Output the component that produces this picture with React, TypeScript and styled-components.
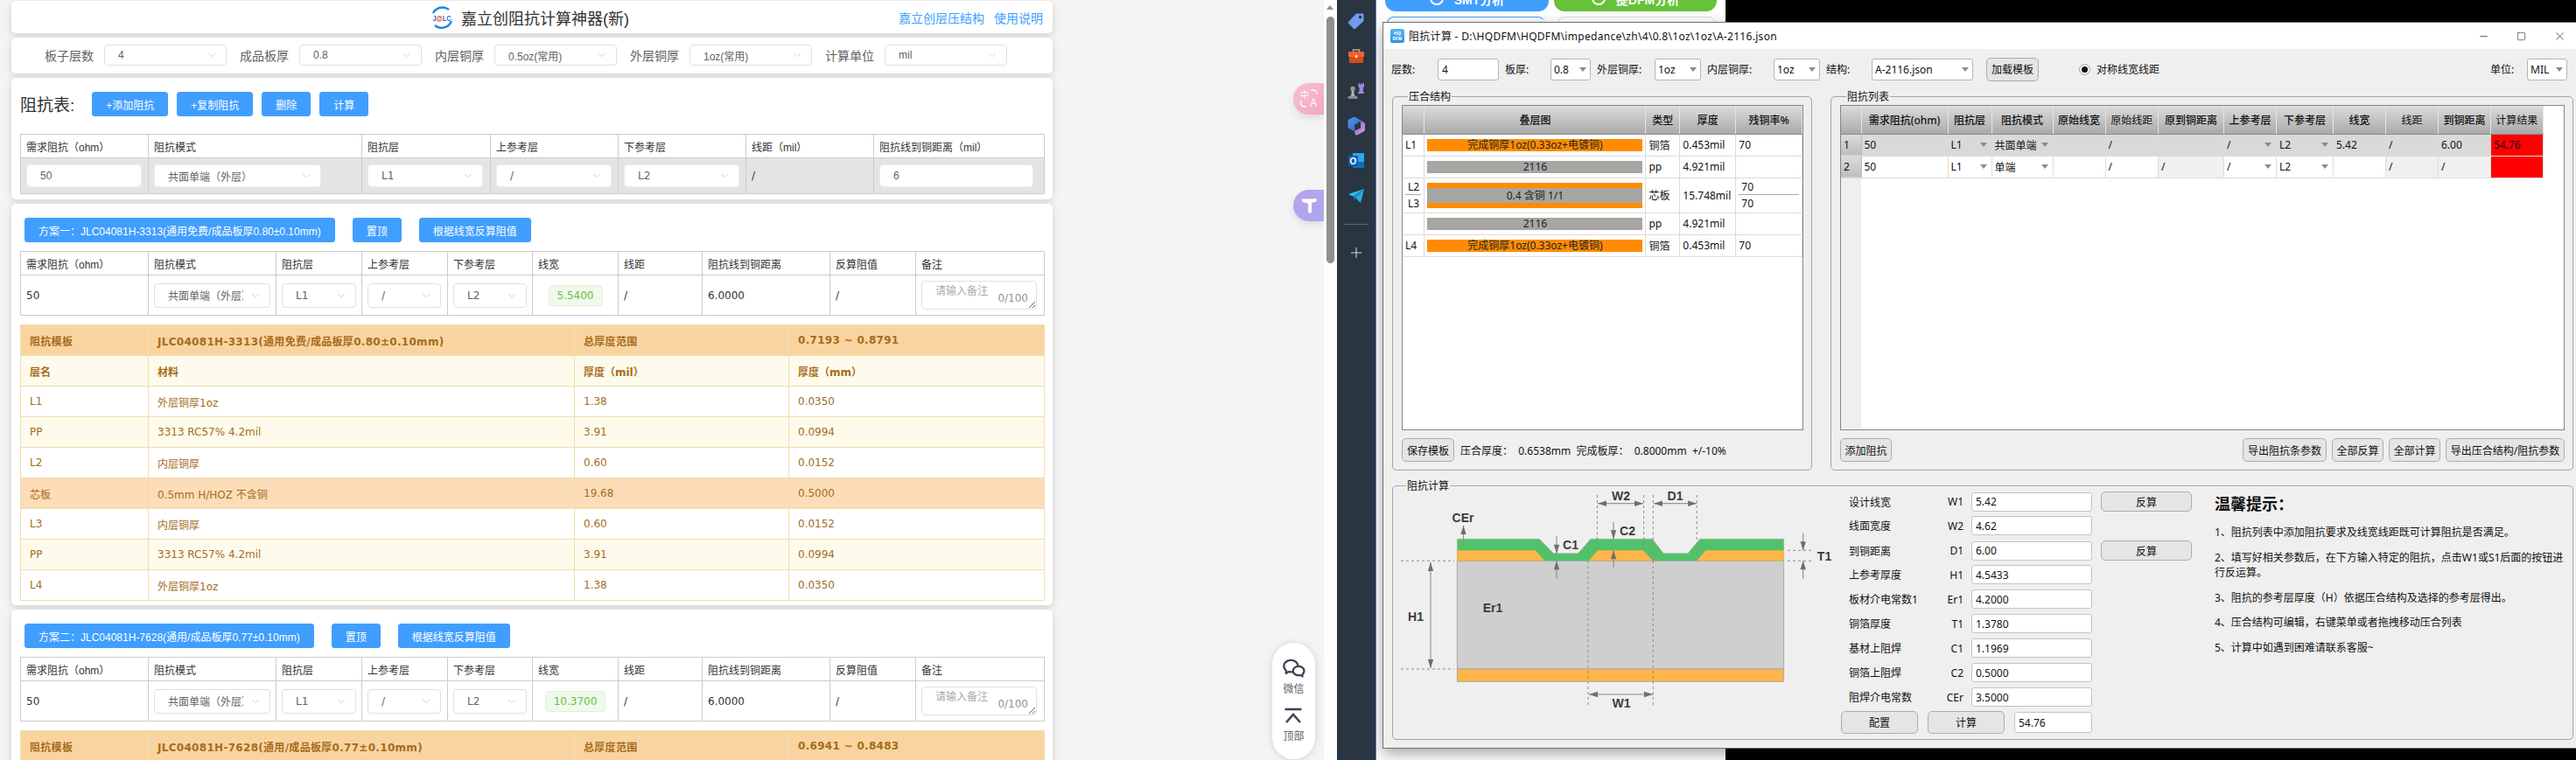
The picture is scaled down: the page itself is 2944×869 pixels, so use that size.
import React from "react";
import styled, { createGlobalStyle } from "styled-components";
import { Minus, Square, X, ChevronDown } from "lucide-react";
import { RiWechatLine } from "react-icons/ri";

const CJK = `"Noto Sans CJK SC"`;
const SANS = `"Liberation Sans", ${CJK}, sans-serif`;
const WIDE = `"DejaVu Sans", ${CJK}, sans-serif`;
const QT = `"Noto Sans", ${CJK}, sans-serif`;

const GlobalStyle = createGlobalStyle`
  html, body { margin: 0; padding: 0; width: 2944px; height: 869px; overflow: hidden; background: #000; }
  * { box-sizing: border-box; }
  #root { width: 2944px; height: 869px; }
`;

const Screen = styled.div`
  display: flex;
  width: 2944px;
  height: 869px;
  overflow: hidden;
  font-family: ${SANS};
`;

/* ---------- browser page ---------- */

const Page = styled.div`
  position: relative;
  flex: 0 0 1513px;
  height: 869px;
  overflow: hidden;
  background: #f4f4f4;
  padding: 1px 0 0 13px;
  display: flex;
  flex-direction: column;
  gap: 5px;
`;

const Card = styled.section<{ $h?: number }>`
  flex: none;
  width: 1190px;
  ${(p) => (p.$h ? `height: ${p.$h}px;` : "")}
  background: #fff;
  border-radius: 5px;
  box-shadow: 0 2px 8px rgba(0, 0, 0, 0.14);
`;

const HeaderCard = styled(Card)`
  display: flex;
  align-items: center;
  padding: 0 11px 0 479px;
`;

const Logo = styled.svg`
  width: 26px;
  height: 26px;
  margin-right: 9px;
`;

const SiteTitle = styled.h1`
  margin: 0;
  font-size: 18px;
  font-weight: 400;
  color: #303133;
  white-space: nowrap;
`;

const Links = styled.nav`
  margin-left: auto;
  display: flex;
  gap: 11px;
`;

const SiteLink = styled.a`
  font-size: 14px;
  color: #409eff;
`;

const OptionsCard = styled(Card)`
  display: flex;
  align-items: center;
  gap: 15px;
  padding-left: 38px;
  padding-bottom: 1px;
`;

const OptionGroup = styled.label`
  display: flex;
  align-items: center;
  gap: 12px;
  font-size: 14px;
  color: #606266;
  white-space: nowrap;
`;

const SelectBox = styled.div<{ $w: number; $h: number; $flat?: boolean }>`
  flex: none;
  width: ${(p) => p.$w}px;
  height: ${(p) => p.$h}px;
  display: flex;
  align-items: center;
  gap: 7px;
  padding: 0 9px 0 15px;
  background: #fff;
  border: 1px solid ${(p) => (p.$flat ? "#ececf0" : "#dcdfe6")};
  border-radius: 4px;
  font-size: 12px;
  color: #606266;
  white-space: nowrap;
`;

const Clip = styled.span`
  flex: 1;
  min-width: 0;
  overflow: hidden;
`;

const Chevron = styled(ChevronDown)`
  flex: none;
  width: 14px;
  height: 14px;
  color: #c0c4cc;
  stroke-width: 1.3;
`;

const SectionCard = styled(Card)`
  padding: 16px 11px 0 10px;
`;

const TitleRow = styled.div`
  display: flex;
  align-items: center;
  gap: 10px;
  height: 28px;
`;

const TableTitle = styled.h2`
  margin: 0 10px 2px 0;
  font-size: 19px;
  font-weight: 400;
  color: #303133;
  white-space: nowrap;
`;

const BlueButton = styled.button`
  flex: none;
  height: 28px;
  padding: 0 15px;
  border: 1px solid #409eff;
  border-radius: 3px;
  background: #409eff;
  color: #fff;
  font-family: ${SANS};
  font-size: 12px;
  white-space: nowrap;
`;

const SchemeRow = styled.div`
  display: flex;
  gap: 20px;
  padding-left: 5px;
  margin-bottom: 10px;
`;

const Grid = styled.table<{ $mt?: number }>`
  table-layout: fixed;
  border-collapse: collapse;
  width: 1170px;
  margin-top: ${(p) => p.$mt ?? 0}px;
  font-family: ${WIDE};
  font-size: 12px;
  color: #333;
`;

const Col = styled.col<{ $w: number }>`
  width: ${(p) => p.$w}px;
`;

const Th = styled.th`
  height: 27px;
  padding: 0 6px;
  border: 1px solid #ccc;
  font-family: ${SANS};
  font-weight: 400;
  text-align: left;
  white-space: nowrap;
  color: #333;
`;

const Td = styled.td<{ $gray?: boolean; $h: number }>`
  height: ${(p) => p.$h}px;
  padding: 0 6px;
  border: 1px solid #ccc;
  background: ${(p) => (p.$gray ? "#e4e4e4" : "#fff")};
  white-space: nowrap;
`;

const Field = styled.input<{ $w: number }>`
  display: block;
  width: ${(p) => p.$w}px;
  height: 26px;
  padding: 0 15px;
  background: #fff;
  border: 1px solid #ececf0;
  border-radius: 4px;
  font-family: ${SANS};
  font-size: 12px;
  color: #606266;
  outline: none;
`;

const ResultTag = styled.span`
  display: block;
  width: max-content;
  height: 24px;
  margin: 0 auto;
  padding: 0 9px;
  line-height: 22px;
  background: #f0f9eb;
  border: 1px solid #e1f3d8;
  border-radius: 4px;
  color: #67c23a;
`;

const NoteWrap = styled.div`
  position: relative;
  width: 132px;
  height: 33px;
`;

const Note = styled.textarea`
  display: block;
  width: 132px;
  height: 33px;
  padding: 4px 15px;
  border: 1px solid #dcdfe6;
  border-radius: 4px;
  font-family: ${SANS};
  font-size: 12px;
  line-height: 15px;
  overflow: hidden;
  outline: none;
  &::placeholder { color: #a8abb2; }
`;

const Counter = styled.span`
  position: absolute;
  right: 10px;
  bottom: 5px;
  font-family: ${WIDE};
  font-size: 12px;
  line-height: 16px;
  color: #909399;
`;

const Stack = styled.table`
  table-layout: fixed;
  border-collapse: collapse;
  width: 1170px;
  margin-top: 10px;
  font-family: ${WIDE};
  font-size: 12px;
  color: #a56c1c;
`;

type Tone = "head" | "sub" | "white" | "pale" | "core";
const toneBg: Record<Tone, string> = {
  head: "#fad4a0",
  sub: "#fefbec",
  white: "#fff",
  pale: "#fefbec",
  core: "#fddcb8",
};

const StackRow = styled.tr<{ $tone: Tone }>`
  background: ${(p) => toneBg[p.$tone]};
  font-weight: ${(p) => (p.$tone === "head" || p.$tone === "sub" ? 700 : 400)};
  letter-spacing: ${(p) => (p.$tone === "head" ? "0.3px" : "0")};
`;

const StackCell = styled.td`
  height: 35px;
  padding: 0 10px;
  border: 1px solid #ecdfb0;
  white-space: nowrap;
`;

const Pill = styled.div`
  position: absolute;
  left: 1454px;
  top: 735px;
  width: 49px;
  height: 133px;
  border-radius: 25px;
  background: #fff;
  box-shadow: 0 1px 8px rgba(60, 70, 100, 0.2);
  display: flex;
  flex-direction: column;
  align-items: center;
  padding-top: 15px;
  font-size: 12px;
  color: #5c6068;
`;

const PillItem = styled.div`
  display: flex;
  flex-direction: column;
  align-items: center;
  gap: 2px;
  margin-bottom: 12px;
  line-height: 16px;
`;

const EdgeTab = styled.div<{ $top: number; $from: string; $to: string }>`
  position: absolute;
  left: 1478px;
  top: ${(p) => p.$top}px;
  width: 35px;
  height: 36px;
  border-radius: 18px 0 0 18px;
  background: linear-gradient(135deg, ${(p) => p.$from}, ${(p) => p.$to});
  box-shadow: 0 4px 10px rgba(0, 0, 0, 0.1);
  display: flex;
  align-items: center;
  justify-content: center;
`;

const ScrollTrack = styled.div`
  flex: 0 0 15px;
  height: 869px;
  background: #fdfdfd;
  padding: 6px 0 0 3px;
`;

const ScrollArrow = styled.div`
  width: 0;
  border: 4.5px solid transparent;
  border-top: 0;
  border-bottom: 5px solid #8f8f8f;
`;

const ScrollThumb = styled.div`
  width: 9px;
  height: 282px;
  margin-top: 8px;
  border-radius: 5px;
  background: #8f8f8f;
`;

const Dock = styled.aside`
  flex: 0 0 45px;
  height: 869px;
  background: #2a3542;
  border-right: 1px solid #4f86c6;
  padding-top: 4px;
  display: flex;
  flex-direction: column;
  align-items: center;
`;

const DockIcon = styled.div`
  flex: none;
  width: 44px;
  height: 40px;
  display: flex;
  align-items: center;
  justify-content: center;
`;

const DockLine = styled.div`
  width: 28px;
  height: 1px;
  margin: 12px 0 12px;
  background: #5c6672;
`;

/* ---------- desktop and window ---------- */

const Desktop = styled.main`
  position: relative;
  flex: 1;
  height: 869px;
  background: #000;
  overflow: hidden;
`;

const BackApp = styled.div`
  width: 399px;
  height: 869px;
  background: #fff;
  padding: 0 10px;
`;

const BackButtons = styled.div`
  display: flex;
  gap: 6px;
`;

const BackButton = styled.div<{ $c: string; $w: number }>`
  display: flex;
  justify-content: center;
  gap: 12px;
  width: ${(p) => p.$w}px;
  height: 13px;
  background: ${(p) => p.$c};
  border-radius: 0 0 12px 12px;
  color: #fff;
  font-size: 14px;
  font-weight: 700;
  line-height: 0;
  overflow: hidden;
`;

const BackGlyph = styled.i`
  flex: none;
  width: 16px;
  height: 16px;
  margin-top: -10px;
  border: 2px solid #fff;
  border-radius: 50%;
`;

const BackTabs = styled.div`
  display: flex;
  gap: 14px;
  margin: 6px 0 0 2px;
`;

const BackTab = styled.div<{ $active?: boolean }>`
  width: 181px;
  height: 12px;
  border: 1px solid #d8dce3;
  border-radius: 8px 8px 0 0;
  ${(p) => (p.$active ? "border-color: #409eff #d8dce3 #d8dce3 #409eff;" : "")}
`;

const AppWindow = styled.div`
  position: absolute;
  left: 7px;
  top: 25px;
  width: 1364px;
  height: 831px;
  background: #efefef;
  border-left: 1px solid #6f6f6f;
  border-top: 1px solid #6f6f6f;
  border-bottom: 1px solid #6f6f6f;
  box-shadow: 0 6px 16px rgba(0, 0, 0, 0.35);
  font-family: ${QT};
  font-size: 12px;
  color: #111;
`;

const TitleBar = styled.header`
  display: flex;
  align-items: center;
  height: 30px;
  padding-left: 8px;
  background: #fff;
`;

const AppIcon = styled.div`
  width: 16px;
  height: 16px;
  margin-right: 5px;
  border-radius: 2px;
  background: linear-gradient(#57b6f5, #2f8fe0);
  color: #fff;
  font-size: 5px;
  line-height: 6px;
  text-align: center;
  padding-top: 2px;
  font-weight: 700;
`;

const WindowName = styled.span`
  letter-spacing: 0.3px;
  white-space: nowrap;
`;

const WindowControls = styled.div`
  margin-left: auto;
  display: flex;
  align-items: center;
  gap: 31px;
  padding-right: 11px;
`;

const Toolbar = styled.div`
  display: flex;
  align-items: center;
  height: 46px;
  padding: 0 3px 0 9px;
`;

const ToolLabel = styled.span<{ $w: number }>`
  flex: none;
  width: ${(p) => p.$w}px;
  white-space: nowrap;
`;

const Combo = styled.div<{ $w: number; $ml?: number }>`
  flex: none;
  width: ${(p) => p.$w}px;
  height: 25px;
  margin: 0 7px 0 ${(p) => p.$ml ?? 0}px;
  padding: 0 4px 0 3px;
  display: flex;
  align-items: center;
  justify-content: space-between;
  background: #fff;
  border: 1px solid #b5b5b5;
  border-radius: 3px;
  white-space: nowrap;
`;

const Caret = styled.i`
  flex: none;
  width: 0;
  height: 0;
  border: 4px solid transparent;
  border-top: 5px solid #8c8c8c;
  border-bottom: 0;
`;

const ToolField = styled.input`
  flex: none;
  width: 70px;
  height: 25px;
  margin-right: 7px;
  padding: 0 4px;
  border: 1px solid #b5b5b5;
  border-radius: 3px;
  background: #fff;
  font: inherit;
  color: inherit;
  outline: none;
`;

const QtButton = styled.button<{ $w: number; $h?: number }>`
  flex: none;
  width: ${(p) => p.$w}px;
  height: ${(p) => p.$h ?? 27}px;
  padding: 0;
  background: #e5e5e5;
  border: 1px solid #adadad;
  border-radius: 5px;
  font-family: ${QT};
  font-size: 12px;
  color: #111;
  white-space: nowrap;
`;

const LoadButton = styled(QtButton)`
  margin-left: 8px;
`;

const Radio = styled.i`
  flex: none;
  display: flex;
  align-items: center;
  justify-content: center;
  width: 13px;
  height: 13px;
  margin: 0 7px 0 46px;
  border: 1px solid #a0a0a0;
  border-radius: 50%;
  background: #fff;
  &::after {
    content: "";
    width: 7px;
    height: 7px;
    border-radius: 50%;
    background: #111;
  }
`;

const GroupRow = styled.div`
  display: flex;
  gap: 21px;
  padding-left: 10px;
`;

const Group = styled.fieldset<{ $w: number; $h: number }>`
  flex: none;
  width: ${(p) => p.$w}px;
  height: ${(p) => p.$h}px;
  min-width: 0;
  margin: 0;
  padding: 1px 9px 0 10px;
  border: 1px solid #a6a6a6;
  border-radius: 5px;
`;

const GroupTitle = styled.legend`
  margin-left: 7px;
  padding: 0 1px;
  font-size: 12px;
  line-height: 17px;
`;

const GridFrame = styled.div`
  position: relative;
  height: 372px;
  background: #fff;
  border: 1px solid #85858c;
  overflow: hidden;
`;

const QtTable = styled.table`
  table-layout: fixed;
  border-collapse: collapse;
  font-size: 12px;
`;

const QtHead = styled.th<{ $strong?: boolean }>`
  height: 32px;
  padding: 0;
  background: linear-gradient(#dcdcdc, #a9a9a9);
  border-right: 1px solid #e4e4e4;
  border-bottom: 1px solid #8e8e8e;
  font-weight: ${(p) => (p.$strong ? 500 : 400)};
  text-align: center;
  white-space: nowrap;
`;

const QtCell = styled.td<{ $bg?: string }>`
  height: 25px;
  padding: 0 3px;
  background: ${(p) => p.$bg ?? "#fff"};
  border-right: 1px solid #dcdcdc;
  border-bottom: 1px solid #dcdcdc;
  white-space: nowrap;
  overflow: hidden;
`;

const TallCell = styled(QtCell)`
  height: 40px;
`;

const CellBar = styled.div<{ $c: string }>`
  height: 14px;
  line-height: 14px;
  background: ${(p) => p.$c};
  color: #222;
  text-align: center;
`;

const CoreBar = styled.div`
  height: 29px;
  line-height: 17px;
  background: #a8a6a3;
  border-top: 6px solid #ff8c00;
  border-bottom: 6px solid #ff8c00;
  color: #222;
  text-align: center;
`;

const SplitCell = styled.div`
  display: flex;
  flex-direction: column;
`;

const SplitPart = styled.div<{ $line?: boolean }>`
  height: 19px;
  line-height: 19px;
  padding-left: 3px;
  ${(p) => (p.$line ? "border-bottom: 1px solid #aaa;" : "")}
`;

const RowHead = styled(QtCell)`
  padding: 0 0 0 3px;
  background: linear-gradient(#dcdcdc, #bcbcbc);
  border-right: 1px solid #bdbdbd;
`;

const HeadStrip = styled.div`
  position: absolute;
  left: 0;
  top: 0;
  bottom: 0;
  width: 23px;
  background: #efefef;
`;

const ListTable = styled(QtTable)`
  position: relative;
`;

const CellCombo = styled.div`
  display: flex;
  align-items: center;
  justify-content: space-between;
  padding-right: 2px;
`;

const ActionRow = styled.div`
  display: flex;
  align-items: center;
  gap: 6px;
  margin-top: 9px;
`;

const Spacer = styled.div`
  flex: 1;
`;

const StackInfo = styled.span`
  margin-left: 1px;
  white-space: pre;
`;

const CalcGroup = styled(Group)`
  margin: 9px 0 0 10px;
  padding: 0 0 0 8px;
`;

const CalcBody = styled.div`
  display: flex;
  height: 100%;
`;

const Diagram = styled.svg`
  flex: none;
  width: 504px;
  height: 270px;
  overflow: visible;
  font-family: "Liberation Sans", sans-serif;
`;

const Form = styled.div`
  flex: none;
  width: 402px;
  margin-top: -2px;
`;

const FormRow = styled.div`
  display: grid;
  grid-template-columns: 90px 50px 138px 1fr;
  height: 22px;
  margin-bottom: 6px;
  padding-left: 9px;
  align-items: center;
`;

const FormCode = styled.span`
  text-align: right;
  padding-right: 9px;
`;

const FormField = styled.input<{ $w?: number; $h?: number }>`
  width: ${(p) => p.$w ?? 138}px;
  height: ${(p) => p.$h ?? 22}px;
  padding: 0 4px;
  background: #fff;
  border: 1px solid #c4c4c4;
  border-radius: 3px;
  font: inherit;
  color: inherit;
  outline: none;
`;

const BackCalc = styled(QtButton)`
  justify-self: end;
  margin-right: 1px;
`;

const FormActions = styled.div`
  display: flex;
  align-items: center;
  gap: 11px;
  margin-top: -1px;
`;

const Tips = styled.div`
  margin-left: 25px;
  width: 408px;
`;

const TipsTitle = styled.h3`
  margin: 0 0 12px;
  font-size: 18px;
  line-height: 24px;
  font-weight: 700;
`;

const Tip = styled.p`
  margin: 0 0 11px;
  line-height: 17.5px;
`;

/* ---------- data ---------- */

const options = [
  ["板子层数", "4"],
  ["成品板厚", "0.8"],
  ["内层铜厚", "0.5oz(常用)"],
  ["外层铜厚", "1oz(常用)"],
  ["计算单位", "mil"],
];

const inputCols = [146, 244, 147, 146, 146, 146, 195];
const inputHeads = ["需求阻抗（ohm）", "阻抗模式", "阻抗层", "上参考层", "下参考层", "线距（mil）", "阻抗线到铜距离（mil）"];

const schemeCols = [146, 146, 98, 98, 97, 98, 96, 146, 98, 147];
const schemeHeads = ["需求阻抗（ohm）", "阻抗模式", "阻抗层", "上参考层", "下参考层", "线宽", "线距", "阻抗线到铜距离", "反算阻值", "备注"];

const stackCols = [146, 487, 245, 292];

const stackRows: { tone: Tone; cells: string[] }[] = [
  { tone: "head", cells: ["阻抗模板", "JLC04081H-3313(通用免费/成品板厚0.80±0.10mm)", "总厚度范围", "0.7193 ~ 0.8791"] },
  { tone: "sub", cells: ["层名", "材料", "厚度（mil）", "厚度（mm）"] },
  { tone: "white", cells: ["L1", "外层铜厚1oz", "1.38", "0.0350"] },
  { tone: "pale", cells: ["PP", "3313 RC57% 4.2mil", "3.91", "0.0994"] },
  { tone: "white", cells: ["L2", "内层铜厚", "0.60", "0.0152"] },
  { tone: "core", cells: ["芯板", "0.5mm H/HOZ 不含铜", "19.68", "0.5000"] },
  { tone: "white", cells: ["L3", "内层铜厚", "0.60", "0.0152"] },
  { tone: "pale", cells: ["PP", "3313 RC57% 4.2mil", "3.91", "0.0994"] },
  { tone: "white", cells: ["L4", "外层铜厚1oz", "1.38", "0.0350"] },
];

const listCols = [23, 99, 50, 70, 60, 60.5, 75, 60, 65, 60, 60, 60, 59.5];
const listHeads: [string, boolean][] = [
  ["", false],
  ["需求阻抗(ohm)", true],
  ["阻抗层", true],
  ["阻抗模式", true],
  ["原始线宽", true],
  ["原始线距", false],
  ["原到铜距离", true],
  ["上参考层", true],
  ["下参考层", true],
  ["线宽", true],
  ["线距", false],
  ["到铜距离", true],
  ["计算结果", false],
];

const formRows = [
  ["设计线宽", "W1", "5.42", true],
  ["线面宽度", "W2", "4.62", false],
  ["到铜距离", "D1", "6.00", true],
  ["上参考厚度", "H1", "4.5433", false],
  ["板材介电常数1", "Er1", "4.2000", false],
  ["铜箔厚度", "T1", "1.3780", false],
  ["基材上阻焊", "C1", "1.1969", false],
  ["铜箔上阻焊", "C2", "0.5000", false],
  ["阻焊介电常数", "CEr", "3.5000", false],
] as const;

const tips = [
  "1、阻抗列表中添加阻抗要求及线宽线距既可计算阻抗是否满足。",
  "2、填写好相关参数后，在下方输入特定的阻抗，点击W1或S1后面的按钮进行反运算。",
  "3、阻抗的参考层厚度（H）依据压合结构及选择的参考层得出。",
  "4、压合结构可编辑，右键菜单或者拖拽移动压合列表",
  "5、计算中如遇到困难请联系客服~",
];

/* ---------- small parts ---------- */

const WebSelect: React.FC<{ w: number; h: number; flat?: boolean; value: string }> = ({ w, h, flat, value }) => (
  <SelectBox $w={w} $h={h} $flat={flat}>
    <Clip>{value}</Clip>
    <Chevron />
  </SelectBox>
);

const CellSelect: React.FC<{ value: string }> = ({ value }) => (
  <CellCombo>
    {value}
    <Caret />
  </CellCombo>
);

const Arrow: React.FC<{ x1: number; y1: number; x2: number; y2: number }> = ({ x1, y1, x2, y2 }) => {
  const a = Math.atan2(y2 - y1, x2 - x1);
  const len = 10;
  const wid = 3.2;
  const bx = x2 - len * Math.cos(a);
  const by = y2 - len * Math.sin(a);
  const px = wid * Math.sin(a);
  const py = wid * Math.cos(a);
  return (
    <g>
      <line x1={x1} y1={y1} x2={x2} y2={y2} stroke="#8a8a8a" strokeWidth="1.1" />
      <polygon points={`${x2},${y2} ${bx + px},${by - py} ${bx - px},${by + py}`} fill="#6f6f6f" />
    </g>
  );
};

const Dash: React.FC<{ x1: number; y1: number; x2: number; y2: number }> = (p) => (
  <line {...p} stroke="#8c8c8c" strokeWidth="1" strokeDasharray="3 3" />
);

const DiagramText: React.FC<{ x: number; y: number; children: string }> = ({ x, y, children }) => (
  <text x={x} y={y} fontSize="14" fontWeight="700" fill="#3c3c3c" textAnchor="middle" dominantBaseline="central">
    {children}
  </text>
);

const StackDiagram: React.FC = () => (
  <Diagram viewBox="0 4 504 270">
    <rect x="65.4" y="81.3" width="373.2" height="123.7" fill="#cfcfcf" stroke="#aaa" />
    <rect x="65.4" y="205" width="373.2" height="14.3" fill="#ffb548" stroke="#aaa" />
    <polygon
      points="65.4,56.3 159.3,56.3 175.4,72.7 203.6,72.7 217.9,56.3 288.6,56.3 301,72.7 329,72.7 342.9,56.3 438.6,56.3 438.6,81.3 65.4,81.3"
      fill="#52c16a"
      stroke="#a8a8a8"
      strokeWidth="0.6"
    />
    <polygon points="65.4,69.3 154.6,69.3 165.4,81.3 65.4,81.3" fill="#ffb548" />
    <polygon points="215.4,81.3 226,69.3 277.9,69.3 289,81.3" fill="#ffb548" />
    <polygon points="339.3,81.3 349.3,69.3 438.6,69.3 438.6,81.3" fill="#ffb548" />
    <Dash x1={1} y1={81.3} x2={62} y2={81.3} />
    <Dash x1={1} y1={205} x2={62} y2={205} />
    <Dash x1={225.4} y1={6} x2={225.4} y2={69} />
    <Dash x1={278.6} y1={6} x2={278.6} y2={69} />
    <Dash x1={289.3} y1={6} x2={289.3} y2={81} />
    <Dash x1={339.3} y1={6} x2={339.3} y2={81} />
    <Dash x1={215} y1={81} x2={215} y2={248} />
    <Dash x1={289.3} y1={81} x2={289.3} y2={248} />
    <Dash x1={443} y1={69.3} x2={472.5} y2={69.3} />
    <Dash x1={443} y1={81.3} x2={472.5} y2={81.3} />
    <Arrow x1={35} y1={144} x2={35} y2={83} />
    <Arrow x1={35} y1={144} x2={35} y2={204} />
    <Arrow x1={72.5} y1={60} x2={72.5} y2={41} />
    <Arrow x1={179} y1={52.7} x2={179} y2={72.7} />
    <Arrow x1={179} y1={101.3} x2={179} y2={81.3} />
    <Arrow x1={244} y1={36.7} x2={244} y2={56.3} />
    <Arrow x1={244} y1={88.7} x2={244} y2={69.3} />
    <Arrow x1={252} y1={15.7} x2={226} y2={15.7} />
    <Arrow x1={252} y1={15.7} x2={278} y2={15.7} />
    <Arrow x1={314} y1={15.7} x2={290} y2={15.7} />
    <Arrow x1={314} y1={15.7} x2={339} y2={15.7} />
    <Arrow x1={252} y1={234} x2={216} y2={234} />
    <Arrow x1={252} y1={234} x2={289} y2={234} />
    <Arrow x1={460.7} y1={49.3} x2={460.7} y2={69.3} />
    <Arrow x1={460.7} y1={102.3} x2={460.7} y2={81.3} />
    <DiagramText x={18} y={145}>H1</DiagramText>
    <DiagramText x={106} y={135}>Er1</DiagramText>
    <DiagramText x={72} y={32}>CEr</DiagramText>
    <DiagramText x={195} y={63}>C1</DiagramText>
    <DiagramText x={260} y={46.5}>C2</DiagramText>
    <DiagramText x={252.5} y={7}>W2</DiagramText>
    <DiagramText x={314.5} y={7}>D1</DiagramText>
    <DiagramText x={253} y={244}>W1</DiagramText>
    <DiagramText x={485} y={76}>T1</DiagramText>
  </Diagram>
);

const InputTable: React.FC = () => (
  <Grid $mt={20}>
    <colgroup>
      {inputCols.map((w, i) => (
        <Col key={i} $w={w} />
      ))}
    </colgroup>
    <thead>
      <tr>
        {inputHeads.map((h) => (
          <Th key={h}>{h}</Th>
        ))}
      </tr>
    </thead>
    <tbody>
      <tr>
        <Td $gray $h={41}><Field $w={132} defaultValue="50" /></Td>
        <Td $gray $h={41}><WebSelect w={191} h={26} flat value="共面单端（外层）" /></Td>
        <Td $gray $h={41}><WebSelect w={132} h={26} flat value="L1" /></Td>
        <Td $gray $h={41}><WebSelect w={132} h={26} flat value="/" /></Td>
        <Td $gray $h={41}><WebSelect w={132} h={26} flat value="L2" /></Td>
        <Td $gray $h={41}>/</Td>
        <Td $gray $h={41}><Field $w={176} defaultValue="6" /></Td>
      </tr>
    </tbody>
  </Grid>
);

const SchemeTable: React.FC<{ width: string }> = ({ width }) => (
  <Grid>
    <colgroup>
      {schemeCols.map((w, i) => (
        <Col key={i} $w={w} />
      ))}
    </colgroup>
    <thead>
      <tr>
        {schemeHeads.map((h) => (
          <Th key={h}>{h}</Th>
        ))}
      </tr>
    </thead>
    <tbody>
      <tr>
        <Td $h={46}>50</Td>
        <Td $h={46}><WebSelect w={133} h={28} value="共面单端（外层）" /></Td>
        <Td $h={46}><WebSelect w={85} h={28} value="L1" /></Td>
        <Td $h={46}><WebSelect w={84} h={28} value="/" /></Td>
        <Td $h={46}><WebSelect w={84} h={28} value="L2" /></Td>
        <Td $h={46}><ResultTag>{width}</ResultTag></Td>
        <Td $h={46}>/</Td>
        <Td $h={46}>6.0000</Td>
        <Td $h={46}>/</Td>
        <Td $h={46}>
          <NoteWrap>
            <Note placeholder="请输入备注" />
            <Counter>0/100</Counter>
          </NoteWrap>
        </Td>
      </tr>
    </tbody>
  </Grid>
);

const StackTable: React.FC<{ rows: { tone: Tone; cells: string[] }[] }> = ({ rows }) => (
  <Stack>
    <colgroup>
      {stackCols.map((w, i) => (
        <Col key={i} $w={w} />
      ))}
    </colgroup>
    <tbody>
      {rows.map((r, i) => (
        <StackRow key={i} $tone={r.tone}>
          {r.cells.map((c, j) => (
            <StackCell key={j}>{c}</StackCell>
          ))}
        </StackRow>
      ))}
    </tbody>
  </Stack>
);

const StackupGrid: React.FC = () => (
  <GridFrame>
    <QtTable>
      <colgroup>
        {[25, 254, 39, 64, 76].map((w, i) => (
          <Col key={i} $w={w} />
        ))}
      </colgroup>
      <thead>
        <tr>
          <QtHead />
          <QtHead $strong>叠层图</QtHead>
          <QtHead $strong>类型</QtHead>
          <QtHead $strong>厚度</QtHead>
          <QtHead $strong>残铜率%</QtHead>
        </tr>
      </thead>
      <tbody>
        <tr>
          <QtCell>L1</QtCell>
          <QtCell><CellBar $c="#ff8c00">完成铜厚1oz(0.33oz+电镀铜)</CellBar></QtCell>
          <QtCell>铜箔</QtCell>
          <QtCell>0.453mil</QtCell>
          <QtCell>70</QtCell>
        </tr>
        <tr>
          <QtCell />
          <QtCell><CellBar $c="#a8a6a3">2116</CellBar></QtCell>
          <QtCell>pp</QtCell>
          <QtCell>4.921mil</QtCell>
          <QtCell />
        </tr>
        <tr>
          <TallCell>
            <SplitCell>
              <SplitPart $line>L2</SplitPart>
              <SplitPart>L3</SplitPart>
            </SplitCell>
          </TallCell>
          <TallCell><CoreBar>0.4 含铜 1/1</CoreBar></TallCell>
          <TallCell>芯板</TallCell>
          <TallCell>15.748mil</TallCell>
          <TallCell>
            <SplitCell>
              <SplitPart $line>70</SplitPart>
              <SplitPart>70</SplitPart>
            </SplitCell>
          </TallCell>
        </tr>
        <tr>
          <QtCell />
          <QtCell><CellBar $c="#a8a6a3">2116</CellBar></QtCell>
          <QtCell>pp</QtCell>
          <QtCell>4.921mil</QtCell>
          <QtCell />
        </tr>
        <tr>
          <QtCell>L4</QtCell>
          <QtCell><CellBar $c="#ff8c00">完成铜厚1oz(0.33oz+电镀铜)</CellBar></QtCell>
          <QtCell>铜箔</QtCell>
          <QtCell>0.453mil</QtCell>
          <QtCell>70</QtCell>
        </tr>
      </tbody>
    </QtTable>
  </GridFrame>
);

const ImpedanceGrid: React.FC = () => {
  const sel = "#d9d9d9";
  const off = "#f0f0f0";
  return (
    <GridFrame>
      <HeadStrip />
      <ListTable>
        <colgroup>
          {listCols.map((w, i) => (
            <Col key={i} $w={w} />
          ))}
        </colgroup>
        <thead>
          <tr>
            {listHeads.map(([h, strong], i) => (
              <QtHead key={i} $strong={strong}>{h}</QtHead>
            ))}
          </tr>
        </thead>
        <tbody>
          <tr>
            <RowHead>1</RowHead>
            <QtCell $bg={sel}>50</QtCell>
            <QtCell $bg={sel}><CellSelect value="L1" /></QtCell>
            <QtCell $bg={sel}><CellSelect value="共面单端" /></QtCell>
            <QtCell $bg={sel} />
            <QtCell $bg={sel}>/</QtCell>
            <QtCell $bg={sel} />
            <QtCell $bg={sel}><CellSelect value="/" /></QtCell>
            <QtCell $bg={sel}><CellSelect value="L2" /></QtCell>
            <QtCell $bg={sel}>5.42</QtCell>
            <QtCell $bg={sel}>/</QtCell>
            <QtCell $bg={sel}>6.00</QtCell>
            <QtCell $bg="#ff0000">54.76</QtCell>
          </tr>
          <tr>
            <RowHead>2</RowHead>
            <QtCell>50</QtCell>
            <QtCell><CellSelect value="L1" /></QtCell>
            <QtCell><CellSelect value="单端" /></QtCell>
            <QtCell />
            <QtCell>/</QtCell>
            <QtCell $bg={off}>/</QtCell>
            <QtCell><CellSelect value="/" /></QtCell>
            <QtCell><CellSelect value="L2" /></QtCell>
            <QtCell />
            <QtCell $bg={off}>/</QtCell>
            <QtCell $bg={off}>/</QtCell>
            <QtCell $bg="#ff0000" />
          </tr>
        </tbody>
      </ListTable>
    </GridFrame>
  );
};

const App: React.FC = () => (
  <Screen>
    <GlobalStyle />
    <Page>
      <HeaderCard $h={37}>
        <Logo viewBox="0 0 26 26">
          <path d="M21 4 A12 12 0 0 0 3 8" fill="none" stroke="#1e86e0" strokeWidth="2.4" />
          <path d="M5 22 A12 12 0 0 0 24 17" fill="none" stroke="#1e86e0" strokeWidth="2.4" />
          <text x="13" y="16.5" fontSize="9.5" fontWeight="700" fontFamily="Liberation Sans" textAnchor="middle" fill="#1e6fd0" textLength="21" lengthAdjust="spacingAndGlyphs">
            J<tspan fill="#e03a3a">@</tspan>LC
          </text>
        </Logo>
        <SiteTitle>嘉立创阻抗计算神器(新)</SiteTitle>
        <Links>
          <SiteLink>嘉立创层压结构</SiteLink>
          <SiteLink>使用说明</SiteLink>
        </Links>
      </HeaderCard>

      <OptionsCard $h={41}>
        {options.map(([label, value]) => (
          <OptionGroup key={label}>
            {label}
            <WebSelect w={140} h={24} value={value} />
          </OptionGroup>
        ))}
      </OptionsCard>

      <SectionCard $h={139}>
        <TitleRow>
          <TableTitle>阻抗表:</TableTitle>
          <BlueButton>+添加阻抗</BlueButton>
          <BlueButton>+复制阻抗</BlueButton>
          <BlueButton>删除</BlueButton>
          <BlueButton>计算</BlueButton>
        </TitleRow>
        <InputTable />
      </SectionCard>

      <SectionCard $h={459}>
        <SchemeRow>
          <BlueButton>方案一：JLC04081H-3313(通用免费/成品板厚0.80±0.10mm)</BlueButton>
          <BlueButton>置顶</BlueButton>
          <BlueButton>根据线宽反算阻值</BlueButton>
        </SchemeRow>
        <SchemeTable width="5.5400" />
        <StackTable rows={stackRows} />
      </SectionCard>

      <SectionCard $h={200}>
        <SchemeRow>
          <BlueButton>方案二：JLC04081H-7628(通用/成品板厚0.77±0.10mm)</BlueButton>
          <BlueButton>置顶</BlueButton>
          <BlueButton>根据线宽反算阻值</BlueButton>
        </SchemeRow>
        <SchemeTable width="10.3700" />
        <StackTable
          rows={[{ tone: "head", cells: ["阻抗模板", "JLC04081H-7628(通用/成品板厚0.77±0.10mm)", "总厚度范围", "0.6941 ~ 0.8483"] }]}
        />
      </SectionCard>

      <EdgeTab $top={95} $from="#f9bfd2" $to="#f2a7c3">
        <svg width="22" height="24" viewBox="0 0 22 24">
          <text x="6" y="10.5" fontSize="10" fill="#fff" textAnchor="middle" fontFamily="Noto Sans CJK SC">中</text>
          <text x="16" y="21" fontSize="12" fill="#fff" textAnchor="middle" fontFamily="Liberation Sans">A</text>
          <path d="M13 2h3a4 4 0 0 1 4 4v1M2 14v2a4 4 0 0 0 4 5h2" fill="none" stroke="#fff" strokeWidth="1.4" />
        </svg>
      </EdgeTab>
      <EdgeTab $top={217} $from="#bba2ea" $to="#aaa8ee">
        <svg width="20" height="20" viewBox="0 0 20 20">
          <path d="M2 2.5h7c2 0 6 0 9-.5 1 0 1 3 0 3.500-1 .5-4 1-5 1.500v10c0 2-4 2-4 0V8C7 6.500 2 6.500 2 5z" fill="#fff" />
        </svg>
      </EdgeTab>

      <Pill>
        <PillItem>
          <RiWechatLine size={28} color="#3f4650" />
          微信
        </PillItem>
        <PillItem>
          <svg width="24" height="24" viewBox="0 0 24 24" fill="none" stroke="#3f4650" strokeWidth="2.6">
            <path d="M2.500 3h19" />
            <path d="M4 18l8-9 8 9" />
          </svg>
          顶部
        </PillItem>
      </Pill>
    </Page>

    <ScrollTrack>
      <ScrollArrow />
      <ScrollThumb />
    </ScrollTrack>

    <Dock>
      <DockIcon>
        <svg width="20" height="20" viewBox="0 0 20 20">
          <path d="M10 1.500h7.500a1 1 0 0 1 1 1V10L9 18.800a1.500 1.500 0 0 1-2 0l-5.800-6a1.500 1.500 0 0 1 0-2z" fill="#6f9cf0" />
          <circle cx="14.500" cy="5.500" r="1.700" fill="#23304a" />
        </svg>
      </DockIcon>
      <DockIcon>
        <svg width="20" height="20" viewBox="0 0 20 20">
          <path d="M6.500 5V3h7v2" fill="none" stroke="#b8a8a0" strokeWidth="1.500" />
          <rect x="1" y="5" width="18" height="6" fill="#f1612a" />
          <rect x="2" y="11" width="16" height="7" fill="#d44e1a" />
          <rect x="8.800" y="9" width="2.400" height="3" fill="#eee" />
        </svg>
      </DockIcon>
      <DockIcon>
        <svg width="20" height="20" viewBox="0 0 20 20">
          <path d="M12.500 1h1.500v2h1V1h1.500v2h1V1H19v4l-1.200 1.500V11h1.200v2h-6.800v-2h1.300V6.500L12.500 5z" fill="#a285dd" />
          <circle cx="6" cy="7.500" r="2.700" fill="#9a9a9a" />
          <path d="M4.500 10h3v4l1.500 2H3l1.500-2z" fill="#b5b5b5" />
          <rect x="0.500" y="16" width="11" height="3" rx="1" fill="#8a8a8a" />
        </svg>
      </DockIcon>
      <DockIcon>
        <svg width="20" height="22" viewBox="0 0 20 22">
          <defs>
            <linearGradient id="cpA" x1="0" y1="0" x2="1" y2="1">
              <stop offset="0" stopColor="#3aa0e8" />
              <stop offset="1" stopColor="#5b4fc9" />
            </linearGradient>
            <linearGradient id="cpB" x1="0" y1="0" x2="1" y2="1">
              <stop offset="0" stopColor="#7a6bd8" />
              <stop offset="1" stopColor="#e09ac8" />
            </linearGradient>
          </defs>
          <path d="M9 1l7 4-7.500 4.500L8 17 2 14c-1-.5-1.500-1.500-1.500-2.500V6C.5 5 1 4 2 3.500L6.500 1C7.500.5 8 .5 9 1z" fill="url(#cpA)" />
          <path d="M16 5l2.500 2c1 .5 1.500 1.500 1.500 2.500V15c0 1-.5 2-1.500 2.500L12 21c-1 .5-2 .5-3 0l-1-4z" fill="url(#cpB)" />
          <path d="M8.500 9.500L15 6.500v7l-6.500 3z" fill="#2a3542" />
        </svg>
      </DockIcon>
      <DockIcon>
        <svg width="20" height="22" viewBox="0 0 20 22">
          <rect x="6" y="2" width="13" height="17" rx="1" fill="#28a8ea" />
          <rect x="6" y="12" width="13" height="7" fill="#0f6cbd" />
          <rect x="1" y="5" width="11" height="12" rx="1" fill="#0a5fb4" />
          <text x="6.500" y="14.500" fontSize="10" fontWeight="700" fontFamily="Liberation Sans" fill="#fff" textAnchor="middle">O</text>
        </svg>
      </DockIcon>
      <DockIcon>
        <svg width="20" height="20" viewBox="0 0 20 20">
          <path d="M19 2L1 8l5.500 2.500z" fill="#32c0f4" />
          <path d="M19 2L6.500 10.500 9 12z" fill="#1b8fd8" />
          <path d="M19 2l-4 16-6-6z" fill="#25aee8" />
          <path d="M6.500 10.500l1 5 1.500-3.500z" fill="#0f6fb5" />
        </svg>
      </DockIcon>
      <DockLine />
      <DockIcon>
        <svg width="14" height="14" viewBox="0 0 14 14" stroke="#d6dbe1" strokeWidth="1">
          <path d="M7 1v12M1 7h12" />
        </svg>
      </DockIcon>
    </Dock>

    <Desktop>
      <BackApp>
        <BackButtons>
          <BackButton $c="#409eff" $w={187}>
            <BackGlyph />
            SMT分析
          </BackButton>
          <BackButton $c="#67c23a" $w={186}>
            <BackGlyph />
            提DFM分析
          </BackButton>
        </BackButtons>
        <BackTabs>
          <BackTab $active />
          <BackTab />
        </BackTabs>
      </BackApp>

      <AppWindow>
        <TitleBar>
          <AppIcon>HQ DFM</AppIcon>
          <WindowName>阻抗计算 - D:\HQDFM\HQDFM\impedance\zh\4\0.8\1oz\1oz\A-2116.json</WindowName>
          <WindowControls>
            <Minus size={13} strokeWidth={1.2} />
            <Square size={11} strokeWidth={1.2} />
            <X size={15} strokeWidth={1} />
          </WindowControls>
        </TitleBar>

        <Toolbar>
          <ToolLabel $w={53}>层数:</ToolLabel>
          <ToolField defaultValue="4" />
          <ToolLabel $w={52}>板厚:</ToolLabel>
          <Combo $w={46}>0.8<Caret /></Combo>
          <ToolLabel $w={66}>外层铜厚:</ToolLabel>
          <Combo $w={53}>1oz<Caret /></Combo>
          <ToolLabel $w={76}>内层铜厚:</ToolLabel>
          <Combo $w={53}>1oz<Caret /></Combo>
          <ToolLabel $w={52}>结构:</ToolLabel>
          <Combo $w={116}>A-2116.json<Caret /></Combo>
          <LoadButton $w={60}>加载模板</LoadButton>
          <Radio />
          对称线宽线距
          <Spacer />
          <ToolLabel $w={42}>单位:</ToolLabel>
          <Combo $w={46}>MIL<Caret /></Combo>
        </Toolbar>

        <GroupRow>
          <Group $w={480} $h={436}>
            <GroupTitle>压合结构</GroupTitle>
            <StackupGrid />
            <ActionRow>
              <QtButton $w={60}>保存模板</QtButton>
              <StackInfo>压合厚度：  0.6538mm  完成板厚：  0.8000mm  +/-10%</StackInfo>
            </ActionRow>
          </Group>
          <Group $w={849} $h={436}>
            <GroupTitle>阻抗列表</GroupTitle>
            <ImpedanceGrid />
            <ActionRow>
              <QtButton $w={59}>添加阻抗</QtButton>
              <Spacer />
              <QtButton $w={96}>导出阻抗条参数</QtButton>
              <QtButton $w={59}>全部反算</QtButton>
              <QtButton $w={59}>全部计算</QtButton>
              <QtButton $w={136}>导出压合结构/阻抗参数</QtButton>
            </ActionRow>
          </Group>
        </GroupRow>

        <CalcGroup $w={1350} $h={299}>
          <GroupTitle>阻抗计算</GroupTitle>
          <CalcBody>
            <StackDiagram />
            <Form>
              {formRows.map(([label, code, value, calc]) => (
                <FormRow key={code}>
                  {label}
                  <FormCode>{code}</FormCode>
                  <FormField defaultValue={value} />
                  {calc && <BackCalc $w={104} $h={23}>反算</BackCalc>}
                </FormRow>
              ))}
              <FormActions>
                <QtButton $w={88} $h={26}>配置</QtButton>
                <QtButton $w={88} $h={26}>计算</QtButton>
                <FormField $w={89} $h={24} defaultValue="54.76" />
              </FormActions>
            </Form>
            <Tips>
              <TipsTitle>温馨提示：</TipsTitle>
              {tips.map((t) => (
                <Tip key={t}>{t}</Tip>
              ))}
            </Tips>
          </CalcBody>
        </CalcGroup>
      </AppWindow>
    </Desktop>
  </Screen>
);

export default App;
